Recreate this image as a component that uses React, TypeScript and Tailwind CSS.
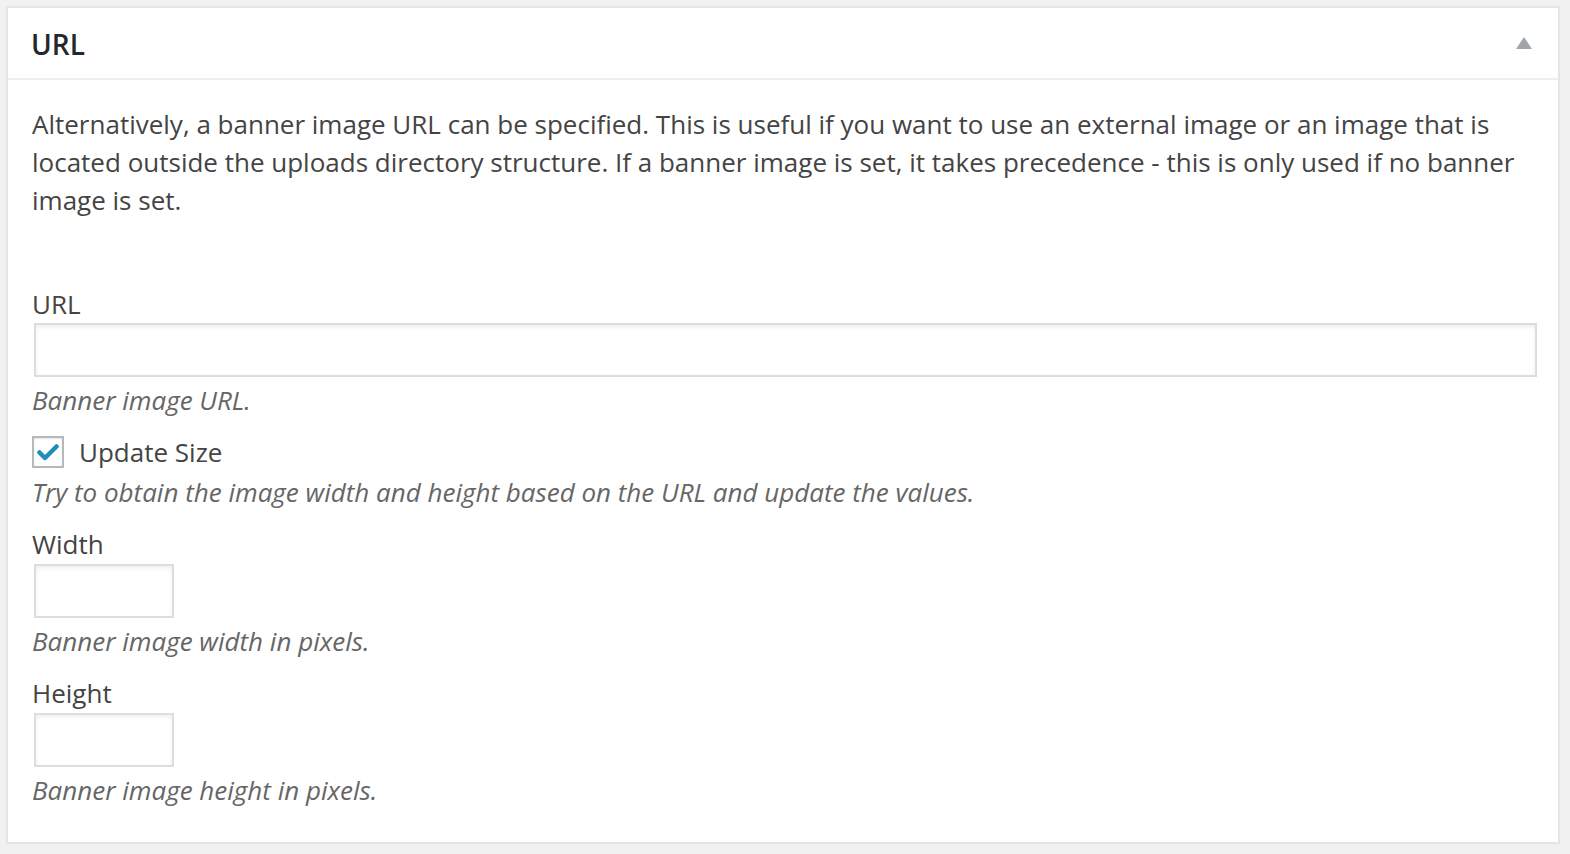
const font = { fontFamily: '"Open Sans", "Noto Sans", sans-serif' };

const Field = ({ className }: { className: string }) => (
  <div
    className={`ml-[2px] h-[54px] border-2 border-[#dddddd] bg-white shadow-[inset_0_2px_4px_rgba(0,0,0,0.07)] ${className}`}
  />
);

export default function App() {
  return (
    <div className="min-h-screen bg-[#f1f1f1] pt-[6px] pl-[6px]" style={font}>
      <div className="w-[1554px] border-2 border-[#e5e5e5] bg-white">
        {/* header */}
        <div className="flex h-[72px] items-center justify-between border-b-2 border-[#eeeeee] pl-[23px] pr-[26px]">
          <h2 className="mt-[1px] text-[28px] font-semibold text-[#23282d]">URL</h2>
          <svg width="16" height="12" viewBox="0 0 16 12">
            <polygon points="8,0 16,12 0,12" fill="#a0a5aa" />
          </svg>
        </div>

        <div className="px-6 pt-[25px] pb-[33px] text-[26px] leading-[38px] text-[#444444]">
          <p>
            Alternatively, a banner image URL can be specified. This is useful if you want to use an external image or an
            image that is located outside the uploads directory structure. If a banner image is set, it takes precedence
            - this is only used if no banner image is set.
          </p>

          <div className="mt-[66px]">URL</div>
          <Field className="w-[1503px]" />
          <div className="mt-[4px] italic text-[#666666]">Banner image URL.</div>

          <div className="mt-[14px] flex h-[38px] items-center">
            <div className="flex h-8 w-8 items-center justify-center border-2 border-[#b4b9be] bg-white shadow-[inset_0_1px_2px_rgba(0,0,0,0.1)]">
              <svg width="24" height="18" viewBox="0 0 24 18">
                <path d="M3.5 9.5 L9 15 L20.5 3.5" fill="none" stroke="#1e8cbe" strokeWidth="4.5" strokeLinecap="round" strokeLinejoin="round" />
              </svg>
            </div>
            <span className="ml-[15px]">Update Size</span>
          </div>
          <div className="mt-[2px] italic text-[#666666]">
            Try to obtain the image width and height based on the URL and update the values.
          </div>

          <div className="mt-[14px]">Width</div>
          <Field className="mt-[1px] w-[140px]" />
          <div className="mt-[4px] italic text-[#666666]">Banner image width in pixels.</div>

          <div className="mt-[14px]">Height</div>
          <Field className="mt-[1px] w-[140px]" />
          <div className="mt-[4px] italic text-[#666666]">Banner image height in pixels.</div>
        </div>
      </div>
    </div>
  );
}
